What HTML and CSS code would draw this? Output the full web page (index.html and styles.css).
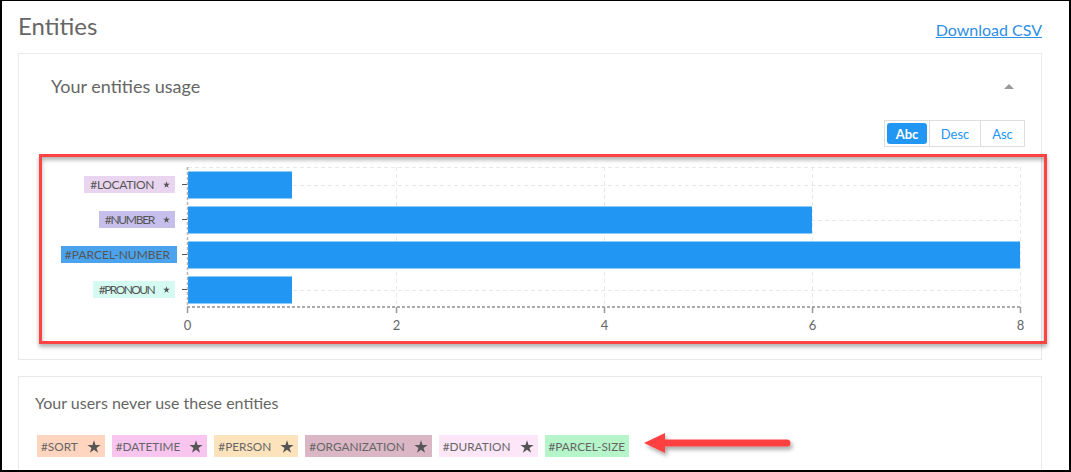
FILE: index.html
```html
<!DOCTYPE html>
<html lang="en">
<head>
<meta charset="utf-8">
<title>Entities</title>
<link rel="stylesheet" href="styles.css">
</head>
<body>
<svg class="defs" width="0" height="0" aria-hidden="true">
  <defs>
    <symbol id="star" viewBox="0 0 14 13.3">
      <path d="M7 0.2 L8.59 5.11 L13.75 5.1 L9.58 8.14 L11.17 13.04 L7 10.01 L2.83 13.04 L4.42 8.14 L0.25 5.1 L5.41 5.11 Z"/>
    </symbol>
    <filter id="shadow" x="-20%" y="-50%" width="140%" height="200%">
      <feDropShadow dx="2" dy="3" stdDeviation="2" flood-color="#000" flood-opacity="0.35"/>
    </filter>
  </defs>
</svg>
<div class="frame">
  <header class="page-head">
    <h1 class="title">Entities</h1>
    <a class="download" href="#">Download CSV</a>
  </header>

  <section class="card usage">
    <div class="card-head">
      <h2 class="card-title">Your entities usage</h2>
      <span class="caret"></span>
    </div>
    <div class="toolbar">
      <div class="seg">
        <button class="seg-btn active">Abc</button>
        <button class="seg-btn desc">Desc</button>
        <button class="seg-btn asc">Asc</button>
      </div>
    </div>
    <div class="chart">
      <div class="ylabels">
        <div class="yrow"><span class="elabel loc"><span class="sq-loc">#LOCATION</span><svg class="mini-star"><use href="#star"/></svg></span></div>
        <div class="yrow"><span class="elabel num"><span class="sq-num">#NUMBER</span><svg class="mini-star"><use href="#star"/></svg></span></div>
        <div class="yrow"><span class="elabel parcel">#PARCEL-NUMBER</span></div>
        <div class="yrow"><span class="elabel pro"><span class="sq-pro">#PRONOUN</span><svg class="mini-star"><use href="#star"/></svg></span></div>
      </div>
      <svg class="plot" width="838" height="175" viewBox="0 0 838 175">
        <g class="grid">
          <line x1="1" y1="0.5" x2="834" y2="0.5"/>
          <line x1="1" y1="18.5" x2="834" y2="18.5"/>
          <line x1="1" y1="53.5" x2="834" y2="53.5"/>
          <line x1="1" y1="88.5" x2="834" y2="88.5"/>
          <line x1="1" y1="123.5" x2="834" y2="123.5"/>
          <line x1="209.5" y1="0" x2="209.5" y2="139"/>
          <line x1="417.5" y1="0" x2="417.5" y2="139"/>
          <line x1="625.5" y1="0" x2="625.5" y2="139"/>
          <line x1="833.5" y1="0" x2="833.5" y2="139"/>
        </g>
        <g class="bars">
          <rect x="1" y="4" width="104" height="28"/>
          <rect x="1" y="39" width="624" height="28"/>
          <rect x="1" y="74" width="832" height="28"/>
          <rect x="1" y="109" width="104" height="28"/>
        </g>
        <g class="bar-edge">
          <line x1="1" y1="4.5" x2="105" y2="4.5"/><line x1="1" y1="31.5" x2="105" y2="31.5"/>
          <line x1="1" y1="39.5" x2="625" y2="39.5"/><line x1="1" y1="66.5" x2="625" y2="66.5"/>
          <line x1="1" y1="74.5" x2="833" y2="74.5"/><line x1="1" y1="101.5" x2="833" y2="101.5"/>
          <line x1="1" y1="109.5" x2="105" y2="109.5"/><line x1="1" y1="136.5" x2="105" y2="136.5"/>
        </g>
        <line class="yaxis" x1="0.5" y1="0" x2="0.5" y2="140"/>
        <line class="xaxis" x1="0" y1="140" x2="834" y2="140"/>
        <g class="ticks">
          <line x1="0.5" y1="140" x2="0.5" y2="146"/>
          <line x1="209.5" y1="140" x2="209.5" y2="146"/>
          <line x1="417.5" y1="140" x2="417.5" y2="146"/>
          <line x1="625.5" y1="140" x2="625.5" y2="146"/>
          <line x1="833.5" y1="140" x2="833.5" y2="146"/>
        </g>
        <g class="tick-labels">
          <text x="0.5" y="162.5">0</text>
          <text x="209.5" y="162.5">2</text>
          <text x="417.5" y="162.5">4</text>
          <text x="625.5" y="162.5">6</text>
          <text x="833.5" y="162.5">8</text>
        </g>
      </svg>
    </div>
    <div class="highlight"></div>
  </section>

  <section class="card unused">
    <p class="unused-title">Your users never use these entities</p>
    <div class="tags">
      <span class="tag sort">#SORT<svg class="tag-star"><use href="#star"/></svg></span>
      <span class="tag datetime">#DATETIME<svg class="tag-star"><use href="#star"/></svg></span>
      <span class="tag person">#PERSON<svg class="tag-star"><use href="#star"/></svg></span>
      <span class="tag org">#ORGANIZATION<svg class="tag-star"><use href="#star"/></svg></span>
      <span class="tag duration">#DURATION<svg class="tag-star"><use href="#star"/></svg></span>
      <span class="tag psize">#PARCEL-SIZE</span>
    </div>
    <svg class="arrow" width="155" height="32" viewBox="0 0 155 32">
      <g filter="url(#shadow)">
        <line x1="24" y1="15" x2="147" y2="15" stroke="#ff4040" stroke-width="7" stroke-linecap="round"/>
        <polygon points="4,15 25,5 25,25" fill="#ff4040"/>
      </g>
    </svg>
  </section>
</div>
</body>
</html>
```

FILE: styles.css
```css
html, body {
  margin: 0;
  padding: 0;
  background: #fff;
}

.defs {
  position: absolute;
  width: 0;
  height: 0;
}

.frame {
  width: 1071px;
  height: 472px;
  box-sizing: border-box;
  border: solid #000;
  border-width: 1px 2px 2px 2px;
  padding: 11px 27px 0 16px;
  overflow: hidden;
  background: #fff;
  font-family: Lato, "Open Sans", sans-serif;
  color: #666;
}

.page-head {
  display: flex;
  justify-content: space-between;
  align-items: flex-end;
  height: 28px;
  margin-bottom: 13px;
}

.title {
  margin: 0;
  font-size: 24px;
  line-height: 28px;
  font-weight: 400;
  color: #666;
}

.download {
  font-size: 16px;
  line-height: 20px;
  color: #2b8fe6;
  text-decoration: underline;
}

.card {
  position: relative;
  border: 1px solid #e9e9e9;
  padding: 16px;
  background: #fff;
}

.usage {
  height: 307px;
  box-sizing: border-box;
  margin-bottom: 16px;
}

.card-head {
  display: flex;
  justify-content: space-between;
  align-items: center;
  height: 24px;
  padding: 4px 11px 0 16px;
}

.card-title {
  margin: 0;
  font-size: 18px;
  line-height: 24px;
  font-weight: 400;
  color: #666;
}

.caret {
  width: 0;
  height: 0;
  border-left: 5px solid transparent;
  border-right: 5px solid transparent;
  border-bottom: 5px solid #999;
}

.toolbar {
  display: flex;
  justify-content: flex-end;
  margin-top: 22px;
}

.seg {
  display: flex;
  height: 27px;
  box-sizing: border-box;
  border: 1px solid #ddd;
}

.seg-btn {
  font-family: inherit;
  font-size: 13px;
  border: 0;
  border-left: 1px solid #ddd;
  background: none;
  color: #2196f3;
  padding: 0;
  box-sizing: border-box;
  cursor: pointer;
}

.seg-btn.active {
  margin: 2px;
  width: 40px;
  height: 21px;
  border: 0;
  border-radius: 3px;
  background: #2196f3;
  color: #fff;
  font-weight: 700;
}

.seg-btn.desc {
  width: 51px;
}

.seg-btn.asc {
  width: 44px;
}

.chart {
  display: flex;
  margin-top: 20px;
  height: 175px;
}

.ylabels {
  width: 152px;
  flex: none;
}

.yrow {
  position: relative;
  height: 35px;
  display: flex;
  align-items: center;
  justify-content: flex-end;
  padding-right: 12px;
}

.yrow::after {
  content: "";
  position: absolute;
  right: 0;
  top: 17px;
  width: 5px;
  height: 1px;
  background: #555;
}

.elabel {
  display: inline-flex;
  align-items: center;
  gap: 9px;
  height: 17px;
  padding: 0 5px 0 6px;
  font-size: 12px;
  color: #555;
  white-space: nowrap;
}

.elabel.loc { background: #ead5f0; }
.elabel.num { background: #c6bfec; }
.elabel.parcel { background: #4ba3ee; padding: 0 7px 0 4px; margin-right: -2px; }
.elabel.pro { background: #d4faf1; }

.sq-loc { letter-spacing: -0.35px; }
.sq-num { letter-spacing: -1.3px; }
.sq-pro { letter-spacing: -1.6px; }

.mini-star {
  width: 7px;
  height: 7px;
  fill: #555;
}

.plot {
  flex: none;
  overflow: visible;
}

.grid line {
  stroke: #e8e8e8;
  stroke-width: 1;
  stroke-dasharray: 4 3;
}

.bars rect {
  fill: #2196f3;
}

.bar-edge line {
  stroke: #8ccaf8;
  stroke-width: 1;
}

.yaxis {
  stroke: #b5b5b5;
  stroke-width: 1.5;
  stroke-dasharray: 3 2;
}

.xaxis {
  stroke: #aaa;
  stroke-width: 2;
  stroke-dasharray: 3 2;
}

.ticks line {
  stroke: #999;
  stroke-width: 1.5;
}

.tick-labels text {
  font-family: Lato, "Open Sans", sans-serif;
  font-size: 13px;
  fill: #666;
  text-anchor: middle;
}

.highlight {
  position: absolute;
  left: 20px;
  top: 100px;
  width: 1008px;
  height: 190px;
  box-sizing: border-box;
  border: 3px solid #ff4242;
  box-shadow: 0 3px 4px rgba(0, 0, 0, 0.3), inset 0 3px 4px rgba(0, 0, 0, 0.3);
  pointer-events: none;
}

.unused {
  height: 140px;
}

.unused-title {
  margin: 0;
  font-size: 16px;
  line-height: 20px;
  color: #666;
}

.tags {
  display: flex;
  gap: 7px;
  margin-top: 22px;
  padding-left: 2px;
}

.tag {
  display: inline-flex;
  align-items: center;
  gap: 9px;
  height: 22px;
  padding: 0 4px;
  font-size: 11.8px;
  color: #666;
  white-space: nowrap;
}

.tag.sort { background: #ffd5bf; }
.tag.datetime { background: #f8c5ef; }
.tag.person { background: #fde3bb; }
.tag.org { background: #dbb7c5; }
.tag.duration { background: #fde6f8; }
.tag.psize { background: #b5f5c9; }

.tag-star {
  width: 14px;
  height: 13px;
  fill: #555;
}

.arrow {
  position: absolute;
  left: 621px;
  top: 51px;
  overflow: visible;
}
```
